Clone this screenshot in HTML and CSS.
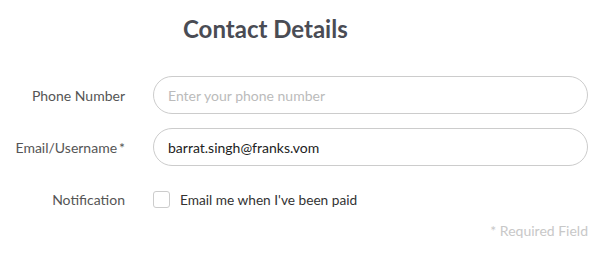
FILE: index.html
```html
<!DOCTYPE html>
<html>
<head>
<meta charset="utf-8">
<link rel="stylesheet" href="styles.css">
</head>
<body>
<div class="page">
  <h1 class="title">Contact Details</h1>
  <div class="form">
    <div class="row">
      <label class="label">Phone Number</label>
      <div class="input placeholder">Enter your phone number</div>
    </div>
    <div class="row">
      <label class="label">Email/Username<span class="star">*</span></label>
      <div class="input">barrat.singh@franks.vom</div>
    </div>
    <div class="row check-row">
      <label class="label">Notification</label>
      <div class="check-wrap">
        <span class="checkbox"></span>
        <span class="check-text">Email me when I've been paid</span>
      </div>
    </div>
  </div>
  <div class="required">* Required Field</div>
</div>
</body>
</html>
```
FILE: styles.css
```css
* { box-sizing: border-box; }
html, body { margin: 0; padding: 0; background: #fff; }
body { font-family: Lato, "Open Sans", sans-serif; color: #333; }
.page { width: 609px; height: 259px; padding: 14px 21px 0 0; }
.title {
  margin: 0 0 0 183px;
  font-size: 24px;
  font-weight: 700;
  color: #4a4c54;
  line-height: 30px;
}
.form { margin-top: 32px; display: flex; flex-direction: column; gap: 14px; }
.row { display: flex; align-items: center; height: 38px; }
.label {
  width: 125px;
  text-align: right;
  font-size: 14px;
  color: #555;
  flex: none;
}
.star { margin-left: 2px; }
.input {
  margin-left: 28px;
  flex: 1;
  height: 38px;
  border: 1px solid #ccc;
  border-radius: 19px;
  padding: 0 14px;
  display: flex;
  align-items: center;
  font-size: 14px;
  color: #222;
}
.input.placeholder { color: #bbb; }
.check-row { height: 38px; }
.check-wrap { margin-left: 28px; display: flex; align-items: center; }
.checkbox {
  width: 17px; height: 17px;
  border: 1px solid #ccc;
  border-radius: 3px;
  display: inline-block;
}
.check-text { margin-left: 10px; font-size: 13.7px; color: #333; }
.required {
  text-align: right;
  font-size: 14px;
  line-height: 17px;
  color: #c8c8c8;
  margin-top: 4px;
}
```
